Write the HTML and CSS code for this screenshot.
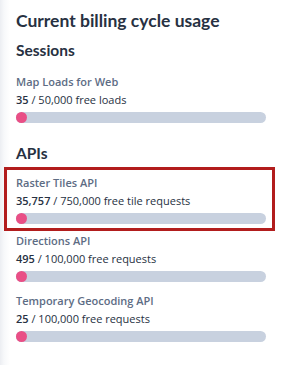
FILE: index.html
```html
<!DOCTYPE html>
<html>
<head>
<meta charset="utf-8">
<link rel="stylesheet" href="styles.css">
</head>
<body>
<main class="panel">
  <h1 class="title">Current billing cycle usage</h1>
  <h2 class="section">Sessions</h2>
  <div class="item">
    <div class="label">Map Loads for Web</div>
    <div class="count"><b>35</b> / 50,000 free loads</div>
    <div class="bar"><span class="dot"></span></div>
  </div>
  <h2 class="section apis">APIs</h2>
  <div class="item highlight">
    <div class="label">Raster Tiles API</div>
    <div class="count"><b>35,757</b> / 750,000 free tile requests</div>
    <div class="bar"><span class="dot"></span></div>
  </div>
  <div class="item after-highlight">
    <div class="label">Directions API</div>
    <div class="count"><b>495</b> / 100,000 free requests</div>
    <div class="bar"><span class="dot"></span></div>
  </div>
  <div class="item">
    <div class="label">Temporary Geocoding API</div>
    <div class="count"><b>25</b> / 100,000 free requests</div>
    <div class="bar"><span class="dot"></span></div>
  </div>
</main>
</body>
</html>
```
FILE: styles.css
```css
html, body {
  margin: 0;
  padding: 0;
}
body {
  width: 288px;
  height: 365px;
  background: linear-gradient(to right, #eceef2 0px, #f7f8fa 4px, #ffffff 10px);
  font-family: "Open Sans", "Liberation Sans", sans-serif;
  color: #273142;
}
.panel {
  padding: 9px 22px 0 16px;
}
.title {
  font-family: Lato, "Open Sans", sans-serif;
  font-weight: 700;
  font-size: 17.5px;
  line-height: 24px;
  margin: 0;
  color: #273142;
}
.section {
  font-family: Lato, "Open Sans", sans-serif;
  font-weight: 700;
  font-size: 15.5px;
  line-height: 20px;
  margin: 7px 0 0;
  color: #273142;
}
.section.apis {
  margin-top: 20px;
}
.item {
  padding-top: 9px;
}
.section + .item {
  padding-top: 12px;
}
.label {
  font-size: 11px;
  line-height: 19px;
  font-weight: 600;
  color: #5d6c84;
}
.count {
  font-size: 11px;
  line-height: 18px;
  color: #273142;
}
.count b {
  font-weight: 600;
}
.bar {
  margin-top: 3px;
  height: 11px;
  border-radius: 6px;
  background: #c8d1df;
  position: relative;
}
.dot {
  position: absolute;
  left: 0;
  top: 0;
  width: 11px;
  height: 11px;
  border-radius: 50%;
  background: #e94f86;
}
.section + .item.highlight {
  margin: 4px -9px 0 -12px;
  padding: 3px 6px 4px 9px;
  border: 3px solid #b21d1d;
}
.item.after-highlight {
  padding-top: 0;
}
```
